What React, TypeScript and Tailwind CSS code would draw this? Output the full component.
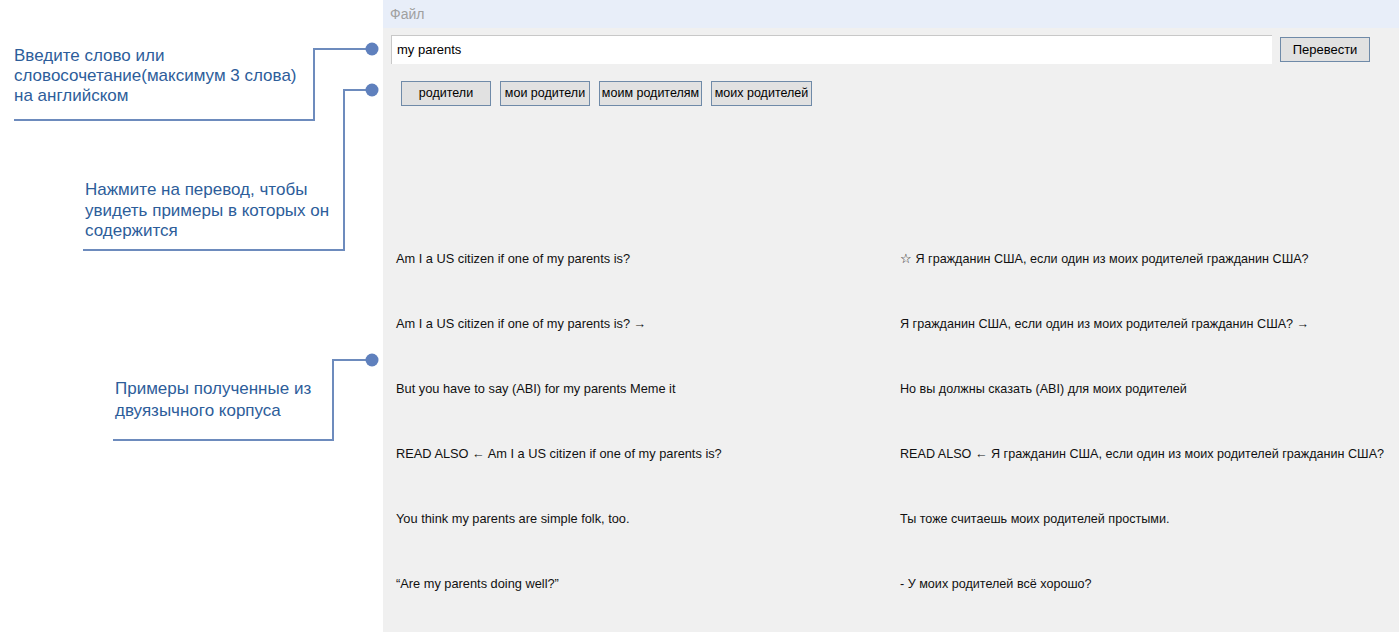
import React from "react";

const rows: [string, string][] = [
  ["Am I a US citizen if one of my parents is?", "☆ Я гражданин США, если один из моих родителей гражданин США?"],
  ["Am I a US citizen if one of my parents is? →", "Я гражданин США, если один из моих родителей гражданин США? →"],
  ["But you have to say (ABI) for my parents Meme it", "Но вы должны сказать (ABI) для моих родителей"],
  ["READ ALSO ← Am I a US citizen if one of my parents is?", "READ ALSO ← Я гражданин США, если один из моих родителей гражданин США?"],
  ["You think my parents are simple folk, too.", "Ты тоже считаешь моих родителей простыми."],
  ["“Are my parents doing well?”", "- У моих родителей всё хорошо?"],
];

const chips = [
  { t: "родители", w: "w-[90px]" },
  { t: "мои родители", w: "w-[90px]" },
  { t: "моим родителям", w: "w-[103px]" },
  { t: "моих родителей", w: "w-[101px]" },
];

export default function App() {
  return (
    <div className="flex h-[632px] w-[1399px] overflow-hidden bg-white" style={{ fontFamily: "'Liberation Sans', Arial, sans-serif" }}>
      {/* Annotation canvas */}
      <div className="relative w-[383px] shrink-0 bg-white">
        <svg className="absolute left-0 top-0" width="383" height="632" viewBox="0 0 383 632">
          <g fill="none" stroke="#6d8bbd" strokeWidth="2">
            <polyline points="14,120 314,120 314,49 372,49" />
            <polyline points="83,250 344,250 344,90 372,90" />
            <polyline points="113,440 333,440 333,360 372,360" />
          </g>
          <g fill="#5f80bd">
            <circle cx="372" cy="49" r="6.5" />
            <circle cx="372" cy="90" r="6.5" />
            <circle cx="372" cy="360" r="6.5" />
          </g>
        </svg>
        <div className="absolute left-[14px] top-[46px] text-[17px] leading-[20px] text-[#2d5d9a]">
          Введите слово или
          <br />
          словосочетание(максимум 3 слова)
          <br />
          на английском
        </div>
        <div className="absolute left-[85px] top-[180px] text-[17px] leading-[20.5px] text-[#2d5d9a]">
          Нажмите на перевод, чтобы
          <br />
          увидеть примеры в которых он
          <br />
          содержится
        </div>
        <div className="absolute left-[115px] top-[378px] text-[17px] leading-[22px] text-[#2d5d9a]">
          Примеры полученные из
          <br />
          двуязычного корпуса
        </div>
      </div>

      {/* App window */}
      <div className="flex min-w-0 flex-1 flex-col bg-[#f0f0f0]">
        <div className="flex h-[28px] items-center bg-[#e8eef9] pl-[7px] text-[14px] text-[#a0a0a0]">Файл</div>
        <div className="mt-[7px] flex items-center pl-[8px] pr-[29px]">
          <div className="flex h-[29px] flex-1 items-center border-t border-l border-[#c8c8c8] bg-white pl-[5px] text-[13px] text-black">
            my parents
          </div>
          <div className="ml-[8px] flex h-[25px] w-[90px] items-center justify-center border border-[#6f8aa8] bg-[#e1e1e1] text-[13px] text-black">
            Перевести
          </div>
        </div>
        <div className="mt-[17px] flex gap-[9px] pl-[18px]">
          {chips.map((c) => (
            <div key={c.t} className={`flex h-[25px] ${c.w} items-center justify-center whitespace-nowrap border border-[#6f8aa8] bg-[#e1e1e1] text-[12.5px] text-black`}>
              {c.t}
            </div>
          ))}
        </div>
        <div className="mt-[120px] grid grid-cols-[517px_1fr]">
          {rows.map(([en, ru], i) => (
            <React.Fragment key={i}>
              <div className="flex h-[65px] items-center pl-[13px] text-[12.8px] text-[#111]">{en}</div>
              <div className="flex h-[65px] items-center whitespace-nowrap pt-[1px] text-[12.6px] text-[#111]">{ru}</div>
            </React.Fragment>
          ))}
        </div>
      </div>
    </div>
  );
}
